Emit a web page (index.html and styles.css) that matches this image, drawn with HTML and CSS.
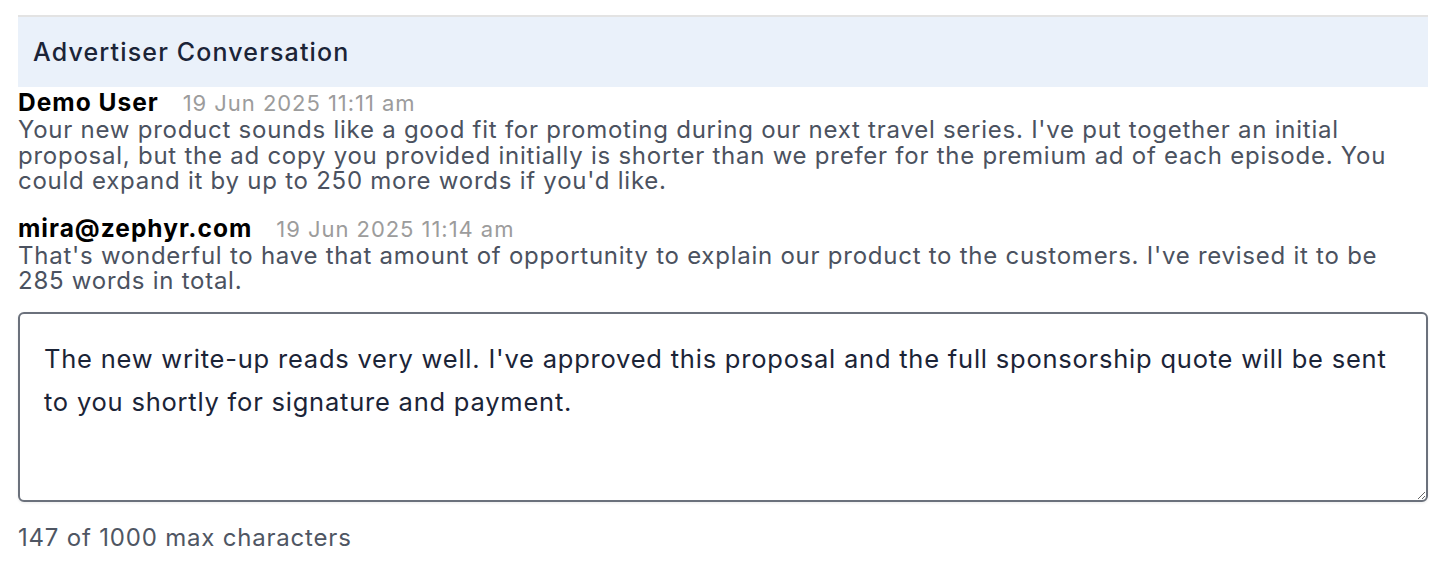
FILE: index.html
```html
<!DOCTYPE html>
<html>
<head>
<meta charset="utf-8">
<link rel="stylesheet" href="styles.css">
</head>
<body>
<div class="panel">
  <div class="panel-header">Advertiser Conversation</div>
  <div class="messages">
    <div class="message">
      <div class="meta"><span class="author">Demo User</span><span class="date">19 Jun 2025 11:11 am</span></div>
      <div class="text">Your new product sounds like a good fit for promoting during our next travel series. I've put together an initial proposal, but the ad copy you provided initially is shorter than we prefer for the premium ad of each episode. You could expand it by up to 250 more words if you'd like.</div>
    </div>
    <div class="message">
      <div class="meta"><span class="author">mira@zephyr.com</span><span class="date">19 Jun 2025 11:14 am</span></div>
      <div class="text">That's wonderful to have that amount of opportunity to explain our product to the customers. I've revised it to be 285 words in total.</div>
    </div>
  </div>
  <textarea class="reply">The new write-up reads very well. I've approved this proposal and the full sponsorship quote will be sent to you shortly for signature and payment.</textarea>
  <div class="counter">147 of 1000 max characters</div>
</div>
</body>
</html>
```
FILE: styles.css
```css
html, body {
  margin: 0;
  padding: 0;
  background: #ffffff;
}
body {
  font-family: Inter, "Liberation Sans", Arial, sans-serif;
}
.panel {
  margin: 15px 16px 0 18px;
  border-top: 2px solid #e3e3e3;
}
.panel-header {
  background: #eaf1fa;
  height: 70px;
  display: flex;
  align-items: center;
  padding-left: 15px;
  font-size: 25px;
  letter-spacing: 1.15px;
  font-weight: 500;
  color: #1b2437;
}
.messages {
  display: flex;
  flex-direction: column;
  gap: 21px;
  padding-top: 2px;
}
.message {
  display: flex;
  flex-direction: column;
}
.meta {
  display: flex;
  align-items: baseline;
  gap: 24px;
  line-height: 27px;
  white-space: nowrap;
}
.author {
  font-weight: 700;
  font-size: 24.5px;
  letter-spacing: 1px;
  color: #000000;
}
.date {
  font-size: 22px;
  letter-spacing: 0.95px;
  color: #9c9c9c;
}
.text {
  font-size: 24px;
  letter-spacing: 0.75px;
  line-height: 25.5px;
  color: #4b5260;
}
.reply {
  display: block;
  box-sizing: border-box;
  width: 100%;
  height: 190px;
  margin-top: 18px;
  border: 2px solid #6b717c;
  border-radius: 6px;
  padding: 23px 24px;
  font-family: Inter, "Liberation Sans", Arial, sans-serif;
  font-size: 25.5px;
  letter-spacing: 0.78px;
  line-height: 43px;
  color: #1b2437;
  resize: vertical;
  box-shadow: 0 1px 3px rgba(0,0,0,0.08);
  outline: none;
}
.counter {
  margin-top: 20px;
  font-size: 24px;
  letter-spacing: 0.8px;
  line-height: 31px;
  color: #4f5663;
}
```
